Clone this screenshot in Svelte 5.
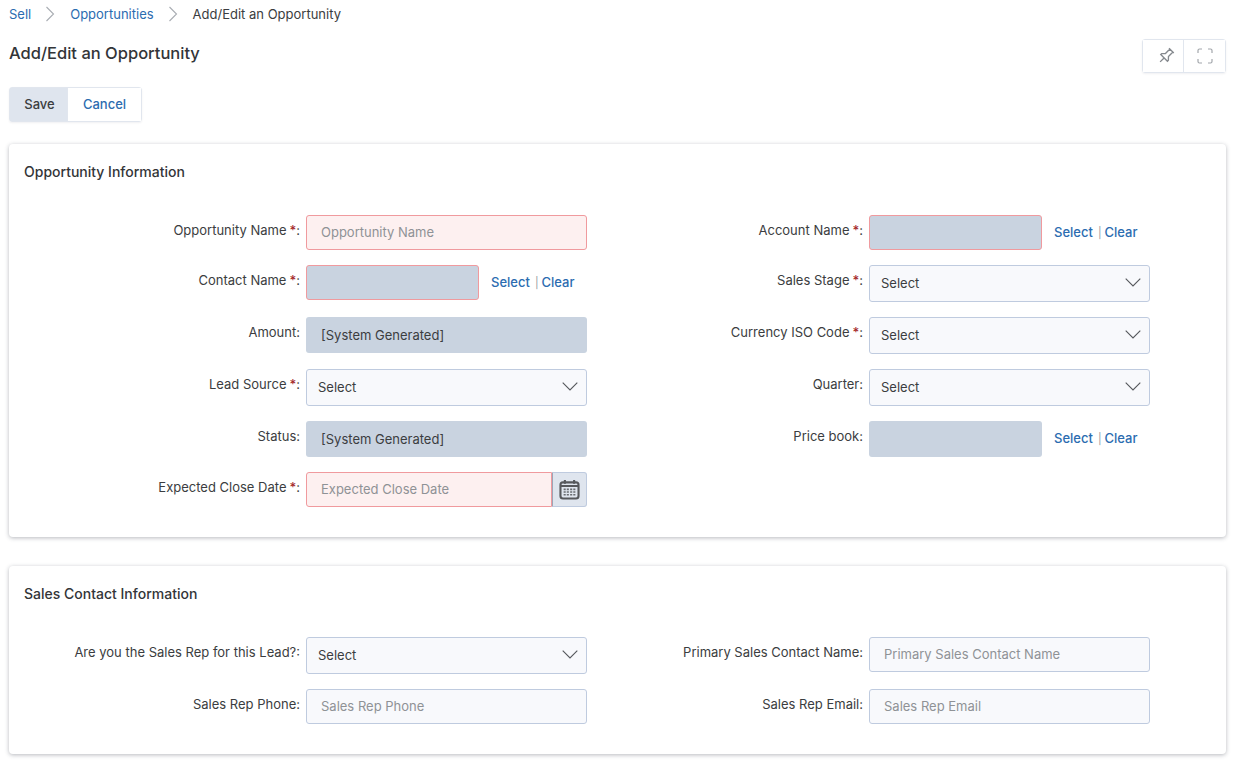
<script>
  const opportunityRows = [
    [
      { label: "Opportunity Name", required: true, type: "input", invalid: true },
      { label: "Account Name", required: true, type: "lookup", invalid: true }
    ],
    [
      { label: "Contact Name", required: true, type: "lookup", invalid: true },
      { label: "Sales Stage", required: true, type: "select" }
    ],
    [
      { label: "Amount", type: "system" },
      { label: "Currency ISO Code", required: true, type: "select" }
    ],
    [
      { label: "Lead Source", required: true, type: "select" },
      { label: "Quarter", type: "select" }
    ],
    [
      { label: "Status", type: "system" },
      { label: "Price book", type: "lookup" }
    ],
    [{ label: "Expected Close Date", required: true, type: "date", invalid: true }]
  ];

  const contactRows = [
    [
      { label: "Are you the Sales Rep for this Lead?", type: "select" },
      { label: "Primary Sales Contact Name", type: "input" }
    ],
    [
      { label: "Sales Rep Phone", type: "input" },
      { label: "Sales Rep Email", type: "input" }
    ]
  ];

  const sections = [
    { title: "Opportunity Information", rows: opportunityRows },
    { title: "Sales Contact Information", rows: contactRows }
  ];
</script>

<main>
  <nav class="crumbs">
    <a href="#sell">Sell</a>
    <svg class="sep" viewBox="0 0 10 16"><path d="M1.5 1l7 7-7 7" /></svg>
    <a href="#opps">Opportunities</a>
    <svg class="sep" viewBox="0 0 10 16"><path d="M1.5 1l7 7-7 7" /></svg>
    <span>Add/Edit an Opportunity</span>
  </nav>

  <header class="head">
    <h1>Add/Edit an Opportunity</h1>
    <div class="tools">
      <button class="pin" aria-label="Pin">
        <svg viewBox="0 0 16 16" width="18" height="18">
          <path transform="rotate(45 8 8)" d="M5 1.2h6M6.1 1.2v5.6L3.8 9.2v1.2h8.4V9.2L9.9 6.8V1.2M8 10.4v5" />
        </svg>
      </button>
      <button class="expand" aria-label="Expand">
        <svg viewBox="0 0 16 16" width="16" height="16">
          <path d="M1 5V2.5A1.5 1.5 0 0 1 2.5 1H5M11 1h2.5A1.5 1.5 0 0 1 15 2.5V5M15 11v2.5a1.5 1.5 0 0 1-1.5 1.5H11M5 15H2.5A1.5 1.5 0 0 1 1 13.5V11" />
        </svg>
      </button>
    </div>
  </header>

  <div class="actions">
    <button class="save">Save</button>
    <button class="cancel">Cancel</button>
  </div>

  {#each sections as section}
    <section class="card">
      <h2>{section.title}</h2>
      <div class="rows">
        {#each section.rows as row}
          <div class="row">
            {#each row as field}
              <div class="field">
                <div class="label">
                  {field.label}{#if field.required}<b>*</b>{/if}:
                </div>
                {#if field.type === "input"}
                  <input class="text" class:invalid={field.invalid} placeholder={field.label} />
                {:else if field.type === "select"}
                  <div class="select">
                    <span>Select</span>
                    <svg viewBox="0 0 16 9" width="16" height="9"><path d="M.7.7L8 8l7.3-7.3" /></svg>
                  </div>
                {:else if field.type === "system"}
                  <div class="system">[System Generated]</div>
                {:else if field.type === "lookup"}
                  <div class="lookup">
                    <div class="lookup-box" class:invalid={field.invalid}></div>
                    <div class="links">
                      <a href="#select">Select</a><i>|</i><a href="#clear">Clear</a>
                    </div>
                  </div>
                {:else if field.type === "date"}
                  <div class="date">
                    <input class="text invalid" placeholder={field.label} />
                    <span class="cal">
                      <svg viewBox="0 0 20 20" width="21" height="21">
                        <rect class="frame" x="1.4" y="3.2" width="17.2" height="15.4" rx="2.4" />
                        <path class="frame" d="M1.5 6.6h17M5.6 1v3.6M14.4 1v3.6" />
                        <path class="dots" d="M4.4 9.8h2M7.4 9.8h2M10.6 9.8h2M13.6 9.8h2M4.4 12.4h2M7.4 12.4h2M10.6 12.4h2M13.6 12.4h2M4.4 15h2M7.4 15h2M10.6 15h2M13.6 15h2" />
                      </svg>
                    </span>
                  </div>
                {/if}
              </div>
            {/each}
          </div>
        {/each}
      </div>
    </section>
  {/each}
</main>

<style>
  :global(body) {
    margin: 0;
    background: #fff;
    color: #3b3d40;
    font-family: Inter, "Liberation Sans", sans-serif;
    font-size: 13px;
  }
  main {
    padding: 0 7px 8px 9px;
  }
  a {
    color: #2b6cb0;
    text-decoration: none;
  }
  .crumbs {
    display: flex;
    align-items: center;
    height: 28px;
    font-size: 13px;
  }
  .sep {
    width: 10px;
    height: 16px;
    margin: 0 15px 0 14px;
    fill: none;
    stroke: #a9adb3;
    stroke-width: 1.1;
  }
  .head {
    display: flex;
    justify-content: space-between;
    align-items: flex-start;
    height: 59px;
  }
  h1 {
    margin: 14px 0 0;
    font-size: 16.5px;
    font-weight: 500;
    line-height: 22px;
    color: #333538;
  }
  .tools {
    box-sizing: border-box;
    display: flex;
    margin-top: 11px;
    width: 84px;
    height: 34px;
    border: 1px solid #e1e6ee;
    border-radius: 3px;
    box-shadow: 0 1px 2px rgba(60, 70, 90, 0.08);
  }
  .tools button {
    flex: 1;
    padding: 0;
    border: 0;
    background: #fff;
    display: flex;
    align-items: center;
    justify-content: center;
  }
  .tools .pin {
    flex: 0 0 40px;
    padding-left: 5px;
  }
  .tools button + button {
    border-left: 1px solid #e1e6ee;
  }
  .tools svg {
    fill: none;
    stroke: #85898e;
    stroke-width: 1.2;
  }
  .tools .expand svg {
    stroke: #a2a6ab;
  }
  .actions {
    box-sizing: border-box;
    display: flex;
    width: 133px;
    height: 35px;
    border: 1px solid #e1e6ee;
    border-radius: 3px;
    box-shadow: 0 1px 2px rgba(60, 70, 90, 0.08);
  }
  .actions button {
    padding: 0 0 2px;
    border: 0;
    font: 500 13px Inter, "Liberation Sans", sans-serif;
  }
  .actions .save {
    width: 57px;
    padding-left: 2px;
    background: #dfe5ee;
    color: #3b3d40;
  }
  .cancel {
    flex: 1;
    background: #fff;
    color: #2b6cb0;
    border-left: 1px solid #e1e6ee !important;
  }
  .card {
    margin-top: 22px;
    padding: 0 15px 30px;
    border-radius: 4px;
    background: #fff;
    box-shadow: 0 1px 4px rgba(50, 55, 70, 0.35);
  }
  .card + .card {
    margin-top: 29px;
  }
  h2 {
    margin: 0;
    padding: 18px 0 33px;
    font-size: 14px;
    font-weight: 500;
    line-height: 20px;
    color: #333538;
  }
  .rows {
    display: flex;
    flex-direction: column;
    gap: 15px;
  }
  .row {
    display: grid;
    grid-template-columns: 563px 563px;
    align-items: start;
  }
  .field {
    display: grid;
    grid-template-columns: 276px 281px;
    column-gap: 6px;
    align-items: start;
  }
  .label {
    padding-top: 6px;
    line-height: 18px;
    text-align: right;
    white-space: nowrap;
  }
  .label b {
    margin-left: 3px;
    color: #a52a2a;
    font-weight: 500;
  }
  .text {
    box-sizing: border-box;
    width: 100%;
    height: 35px;
    padding: 0 14px 1px;
    border: 1px solid #bfcbdf;
    border-radius: 3px;
    background: #f8f9fc;
    color: #3b3d40;
    font: 13px Inter, "Liberation Sans", sans-serif;
    outline: none;
  }
  .text::placeholder {
    color: #8f9296;
    opacity: 1;
  }
  .text.invalid {
    border-color: #f09a9e;
    background: #fdf0f0;
  }
  .select {
    box-sizing: border-box;
    height: 37px;
    padding: 0 8px 2px 11px;
    display: flex;
    align-items: center;
    justify-content: space-between;
    border: 1px solid #bfcbdf;
    border-radius: 3px;
    background: #f8f9fc;
    color: #3b3d40;
  }
  .select svg {
    fill: none;
    stroke: #55585c;
    stroke-width: 1.1;
  }
  .system {
    box-sizing: border-box;
    height: 36px;
    padding: 0 15px 1px;
    display: flex;
    align-items: center;
    border-radius: 3px;
    background: #c9d3e0;
    color: #3b3d40;
  }
  .lookup {
    display: flex;
    align-items: center;
  }
  .lookup-box {
    box-sizing: border-box;
    width: 173px;
    height: 36px;
    border-radius: 3px;
    background: #c9d3e0;
  }
  .lookup-box.invalid {
    height: 35px;
    border: 1px solid #f09a9e;
  }
  .links {
    margin-left: 12px;
    padding-bottom: 2px;
    font-weight: 500;
  }
  .links i {
    margin: 0 3px 0 5px;
    color: #9a9da1;
    font-style: normal;
    font-size: 11px;
    font-weight: 400;
  }
  .date {
    display: flex;
  }
  .date .text {
    flex: 1;
    border-radius: 3px 0 0 3px;
  }
  .cal {
    box-sizing: border-box;
    flex: 0 0 35px;
    height: 35px;
    display: flex;
    align-items: center;
    justify-content: center;
    border: 1px solid #bfcbdf;
    border-left: 1px solid #9aa6b8;
    border-radius: 0 3px 3px 0;
    background: #dfe5ee;
  }
  .frame {
    fill: none;
    stroke: #56585c;
    stroke-width: 2;
  }
  .dots {
    fill: none;
    stroke: #6a6d72;
    stroke-width: 1.6;
  }
</style>
